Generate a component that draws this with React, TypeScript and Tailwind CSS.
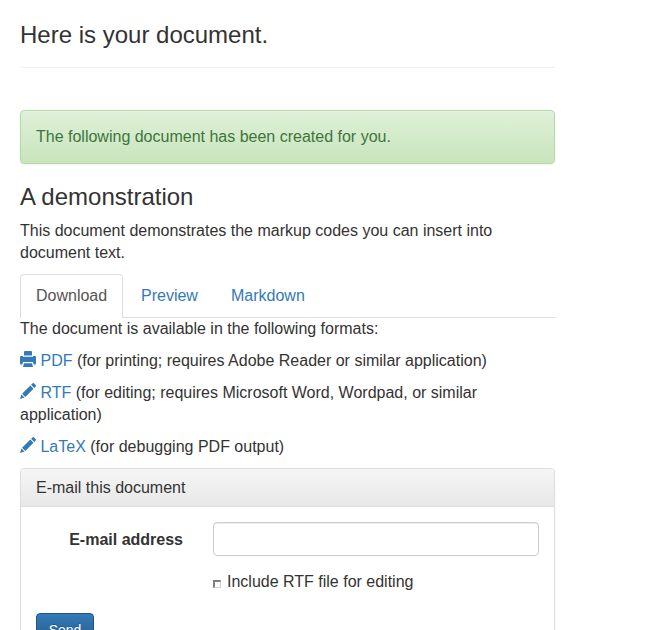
const Printer = () => (
  <svg className="inline-block h-4 w-4 align-[-1px]" viewBox="0 0 16 16" fill="#337ab7">
    <path d="M5 0h6q1 0 1 1v3.500H4V1q0-1 1-1z" />
    <path d="M0 6q0-1 1-1h1.500l.7.700h9.600l.7-.7H15q1 0 1 1v6.500q0 1-1 1h-1.300L13 11H3l-.7 2.500H1q-1 0-1-1z" />
    <path d="M4 12.300h8l1 3.700H3z" />
  </svg>
);

const Pencil = () => (
  <svg className="inline-block h-4 w-4 align-[-1px]" viewBox="0 0 16 16" fill="#337ab7">
    <path d="M12.400.4a1.200 1.200 0 0 1 1.700 0l1.500 1.500a1.200 1.200 0 0 1 0 1.700l-1.300 1.300-3.200-3.200zM10.300 2.500l3.200 3.200-8.200 8.200-3.200-3.200zM1.400 11.500l3.100 3.100L0 16z" />
  </svg>
);

export default function App() {
  return (
    <div className="h-[630px] overflow-hidden bg-white pl-5 font-['Liberation_Sans',Arial,sans-serif] text-[16px] leading-[22px] text-[#333]">
      <main className="w-[535px]">
        <header className="h-[68px] border-b border-[#eee] pt-[21px]">
          <h1 className="text-[24px] leading-[27px]">Here is your document.</h1>
        </header>
        <div className="mt-[42px] h-[54px] rounded-[4px] border border-[#b2dba1] bg-linear-to-b from-[#dff0d8] to-[#c8e5bc] px-[15px] py-[15px] text-[#3c763d] shadow-[inset_0_1px_0_rgba(255,255,255,.25),0_1px_2px_rgba(0,0,0,.05)]">
          The following document has been created for you.
        </div>
        <h2 className="mt-[20px] text-[24px] leading-[26px]">A demonstration</h2>
        <p className="mt-[10px]">This document demonstrates the markup codes you can insert into document text.</p>
        <nav className="mt-[10px] flex h-[44px] border-b border-[#ddd]">
          <a className="mr-[2px] h-[44px] w-[103px] rounded-t-[4px] border border-b-0 border-[#ddd] bg-white px-[15px] pt-[10px] text-[#555]">Download</a>
          <a className="mr-[2px] w-[88px] px-4 pt-[11px] text-[#337ab7]">Preview</a>
          <a className="px-4 pt-[11px] text-[#337ab7]">Markdown</a>
        </nav>
        <p>The document is available in the following formats:</p>
        <p className="mt-[10px]"><Printer /> <a className="text-[#337ab7]">PDF</a> (for printing; requires Adobe Reader or similar application)</p>
        <p className="mt-[10px]"><Pencil /> <a className="text-[#337ab7]">RTF</a> (for editing; requires Microsoft Word, Wordpad, or similar application)</p>
        <p className="mt-[10px]"><Pencil /> <a className="text-[#337ab7]">LaTeX</a> (for debugging PDF output)</p>
        <section className="mt-[10px] rounded-[4px] border border-[#ddd] shadow-[0_1px_2px_rgba(0,0,0,.05)]">
          <div className="h-[38px] rounded-t-[3px] border-b border-[#ddd] bg-linear-to-b from-[#f5f5f5] to-[#e8e8e8] px-[15px] pt-[8px]">E-mail this document</div>
          <div className="h-[160px] px-[15px] pt-[15px]">
            <div className="flex">
              <label className="w-[147px] pt-[7px] text-right font-bold">E-mail address</label>
              <input className="ml-[30px] h-[34px] w-[326px] rounded-[4px] border border-[#ccc] bg-white px-3 shadow-[inset_0_1px_1px_rgba(0,0,0,.075)] outline-none" />
            </div>
            <label className="mt-[15px] flex pl-[177px]">
              <span className="mt-[9px] mr-[6px] size-2 border border-t-2 border-l-2 border-t-[#808080] border-r-[#d4d0c8] border-b-[#d4d0c8] border-l-[#808080] bg-white" />
              Include RTF file for editing
            </label>
            <button className="mt-[20px] h-[34px] w-[58px] rounded-[4px] border border-[#245580] bg-linear-to-b from-[#337ab7] to-[#265a88] text-[14px] leading-5 text-white [text-shadow:0_-1px_0_rgba(0,0,0,.2)]">Send</button>
          </div>
        </section>
      </main>
    </div>
  );
}
